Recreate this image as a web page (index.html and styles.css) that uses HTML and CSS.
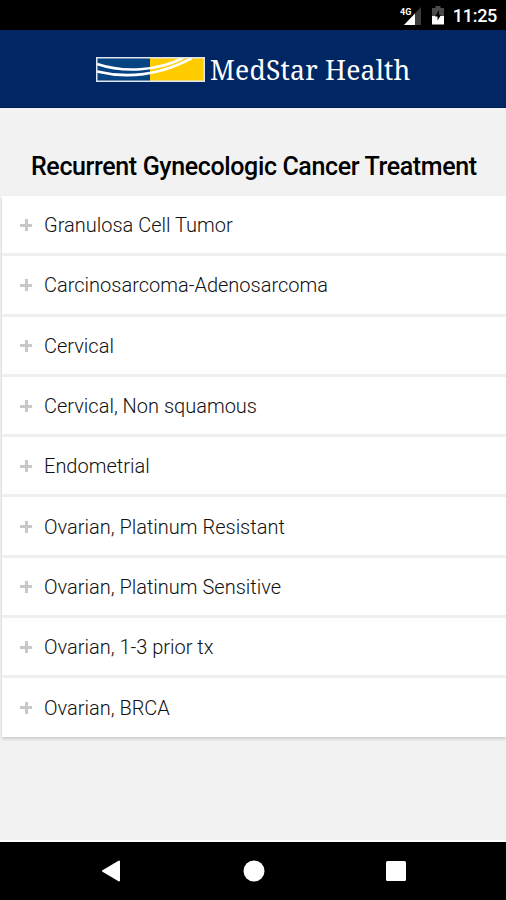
FILE: index.html
```
<!DOCTYPE html>
<html lang="en">
<head>
    <meta charset="UTF-8">
    <meta name="viewport" content="width=device-width, initial-scale=1.0">
    <title>MedStar Health</title>
    <link rel="stylesheet" href="styles.css">
</head>
<body>
    <div class="status-bar">
        <svg class="signal" width="24" height="20" viewBox="0 0 24 20">
            <path d="M23 1v18H6z" fill="#3c3c3c"/>
            <path d="M17 7.500V19H6z" fill="#fff"/>
            <text x="2" y="9" class="network">4G</text>
        </svg>
        <svg class="battery" width="12" height="19" viewBox="0 0 12 19">
            <path d="M3.500 0h5v2H12v8H0V2h3.500z" fill="#4a4a4a"/>
            <path d="M0 10h12v8.500H0z" fill="#fff"/>
            <path d="M7 4L3 10.500h2.500v4L9 9H7z" fill="#000"/>
        </svg>
        <span class="clock">11:25</span>
    </div>

    <header class="header">
        <svg class="logo" width="109" height="25" viewBox="0 0 109 25">
            <path d="M1 1h53v23H1z" fill="#064382"/>
            <path d="M54 1h54v23H54z" fill="#fc0"/>
            <path d="M1 7C28 16 61 14 87 1" fill="none" stroke="#fff" stroke-width="2.600"/>
            <path d="M1 14.500C32 22 64 18 96 1" fill="none" stroke="#fff" stroke-width="2.600"/>
            <path d="M.75.750h107.500v23.500H.750z" fill="none" stroke="#dfe5f0" stroke-width="1.500"/>
        </svg>
        <span class="brand">MedStar Health</span>
    </header>

    <main class="content">
        <h1>Recurrent Gynecologic Cancer Treatment</h1>
        <ul class="list">
            <li><i class="plus"></i><span>Granulosa Cell Tumor</span></li>
            <li><i class="plus"></i><span>Carcinosarcoma-Adenosarcoma</span></li>
            <li><i class="plus"></i><span>Cervical</span></li>
            <li><i class="plus"></i><span>Cervical, Non squamous</span></li>
            <li><i class="plus"></i><span>Endometrial</span></li>
            <li><i class="plus"></i><span>Ovarian, Platinum Resistant</span></li>
            <li><i class="plus"></i><span>Ovarian, Platinum Sensitive</span></li>
            <li><i class="plus"></i><span>Ovarian, 1-3 prior tx</span></li>
            <li><i class="plus"></i><span>Ovarian, BRCA</span></li>
        </ul>
    </main>

    <nav class="nav-bar">
        <svg width="20" height="22" viewBox="0 0 20 22"><path d="M18 1.500v19L2 11z" fill="#fff" stroke="#fff" stroke-width="2" stroke-linejoin="round"/></svg>
        <svg width="22" height="22" viewBox="0 0 22 22"><circle cx="11" cy="11" r="10.500" fill="#fff"/></svg>
        <svg width="20" height="20" viewBox="0 0 20 20"><rect width="20" height="20" rx="1.500" fill="#fff"/></svg>
    </nav>
</body>
</html>
```
FILE: styles.css
```
* {
    box-sizing: border-box;
}

body {
    margin: 0;
    height: 900px;
    display: flex;
    flex-direction: column;
    overflow: hidden;
    background: #f2f2f2;
    color: #000;
    font-family: Roboto, "Liberation Sans", sans-serif;
}

.status-bar {
    height: 30px;
    display: flex;
    align-items: center;
    justify-content: flex-end;
    padding: 1px 9px 0 0;
    background: #000;
    color: #fff;
}

.network {
    fill: #fff;
    font-size: 9px;
    font-weight: 700;
}

.battery {
    margin: 0 9px 0 10px;
}

.clock {
    font-size: 18px;
    font-weight: 500;
    letter-spacing: -0.3px;
}

.header {
    height: 78px;
    display: flex;
    align-items: center;
    padding: 1px 0 0 96px;
    background: #002664;
    border-bottom: 1px solid #001c52;
}

.brand {
    margin: 2px 0 0 5px;
    color: #fff;
    font-family: "Noto Serif", "Liberation Serif", serif;
    font-size: 26.5px;
    letter-spacing: 0.2px;
    white-space: nowrap;
}

.content {
    flex: 1;
    padding-top: 43px;
    border-bottom: 2px solid #fff;
}

h1 {
    margin: 0;
    height: 45px;
    line-height: 32px;
    padding-left: 31px;
    font-size: 25px;
    font-weight: 500;
    letter-spacing: -0.37px;
    white-space: nowrap;
}

.list {
    margin: 0 0 0 2px;
    padding: 0;
    list-style: none;
    background: #fff;
    box-shadow: 0 2px 3px rgba(0, 0, 0, 0.16);
}

.list li {
    height: 60.3px;
    display: flex;
    align-items: center;
    padding: 1px 0 0 18px;
    border-bottom: 3px solid #efefef;
    color: #111;
    font-size: 20px;
    font-weight: 300;
}

.list li:last-child {
    height: 58.5px;
    padding-top: 0;
    border-bottom: none;
}

.plus {
    width: 12px;
    height: 12px;
    margin-right: 12px;
    background:
        linear-gradient(#c8c8c8, #c8c8c8) center / 12px 3px no-repeat,
        linear-gradient(#c8c8c8, #c8c8c8) center / 3px 12px no-repeat;
}

.nav-bar {
    height: 58px;
    display: flex;
    align-items: center;
    justify-content: space-between;
    padding: 0 100px 0 101px;
    background: #000;
}
```
